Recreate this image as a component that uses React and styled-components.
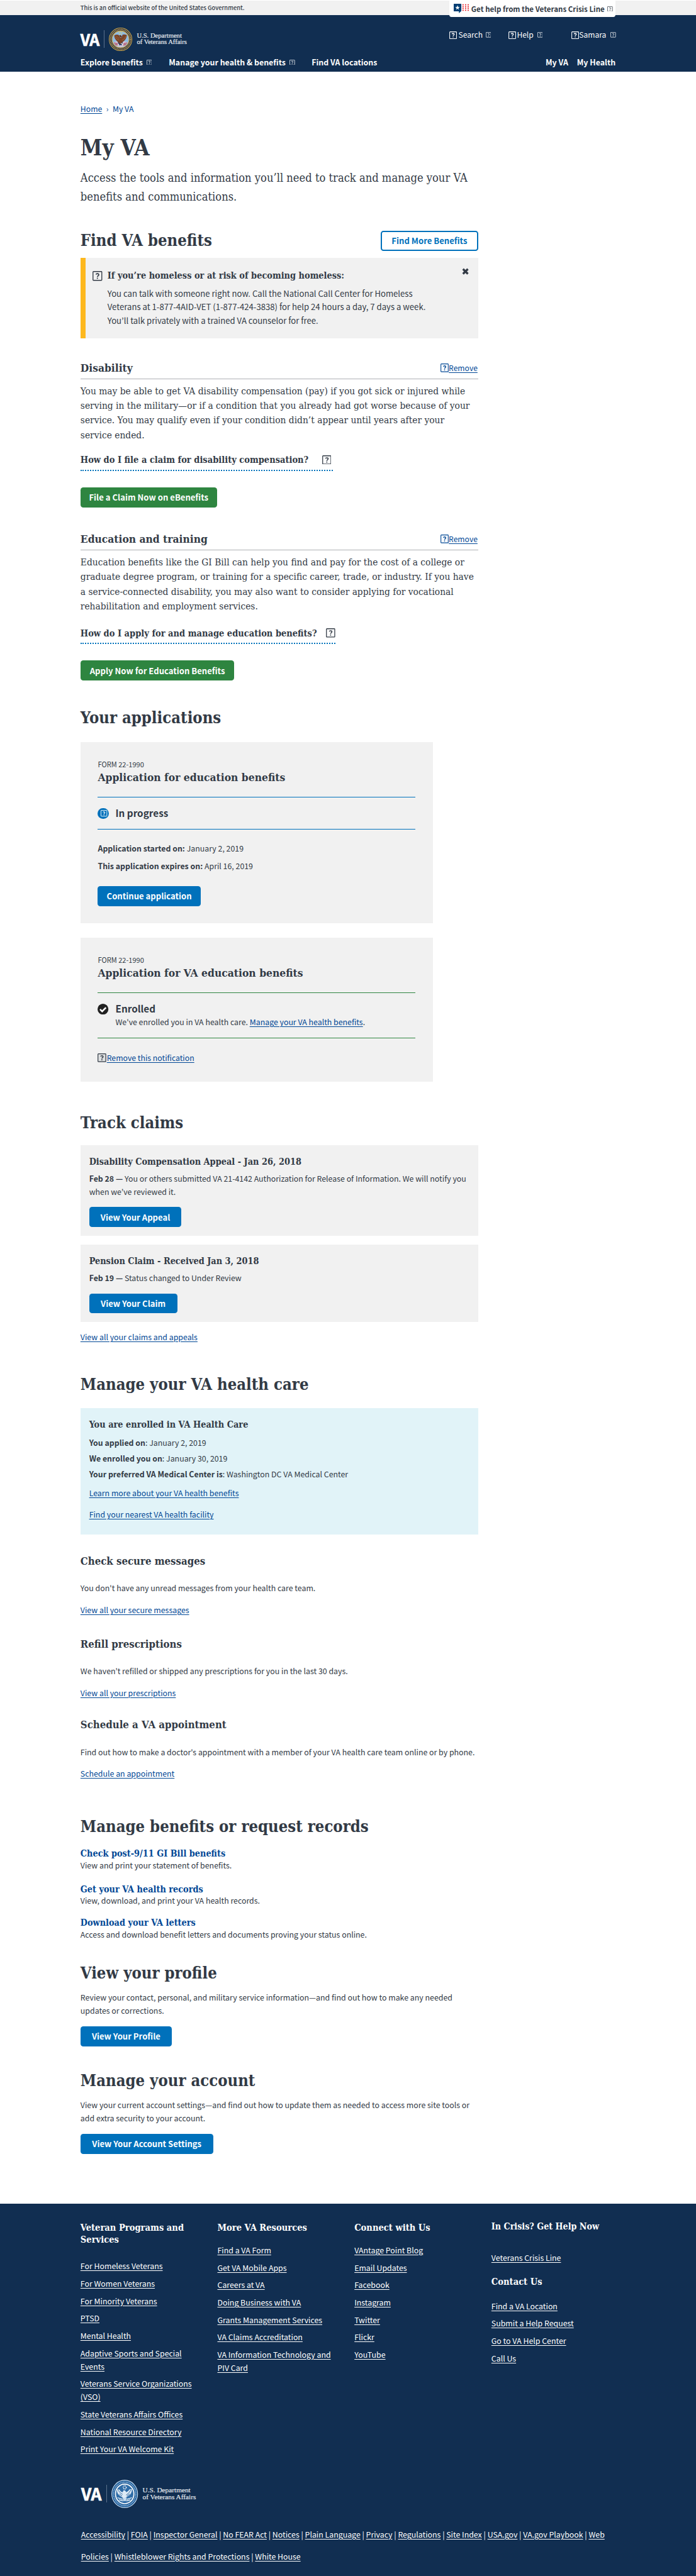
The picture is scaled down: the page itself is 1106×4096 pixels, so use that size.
import React from 'react';
import styled, { createGlobalStyle, css } from 'styled-components';

/* 1rem is ten layout pixels of the 1280px wide page */
const rem = (n) => `${n / 10}rem`;

const color = {
  ink: '#323a45',
  navy: '#112e51',
  link: '#004795',
  blue: '#0071bb',
  green: '#2e8540',
  gray: '#f1f1f1',
  sky: '#e1f3f8',
  gold: '#fdb81e',
};

const sans = css`font-family: "Noto Sans CJK KR", "Open Sans", sans-serif;`;
const slab = css`font-family: "DejaVu Serif Condensed", "DejaVu Serif", serif; font-stretch: condensed;`;

const GlobalStyle = createGlobalStyle`
  html { font-size: 8.638px; }
  body { margin: 0; background: #fff; color: ${color.ink}; ${sans} }
  * { box-sizing: border-box; }
  h1, h2, h3, h4, p, ul { margin: 0; padding: 0; }
  ul { list-style: none; }
`;

const space = css`margin-top: ${(p) => rem(p.$mt || 0)};`;

const Page = styled.div`
  width: 100%;
  white-space: nowrap;
  overflow: hidden;
`;

/* ---------- icons ---------- */
const IconBox = styled.svg`
  display: block;
  flex: none;
  width: ${(p) => rem(p.$w)};
  height: ${(p) => rem(p.$h || p.$w)};
  fill: none;
  stroke: currentColor;
`;

function Unknown({ w, h }) {
  return (
    <IconBox $w={w} $h={h} viewBox="0 0 16 16" preserveAspectRatio="none">
      <rect x="0.8" y="0.8" width="14.4" height="14.4" rx="0.8" strokeWidth="1.4" />
      <path d="M5.7 5.6C6.1 4 10.3 3.6 10.3 6.1C10.3 7.7 8 7.8 8 9.6" strokeWidth="1.7" />
      <path d="M8 10.8V12.6" strokeWidth="1.9" />
    </IconBox>
  );
}

function CloseIcon() {
  return (
    <IconBox $w={13} viewBox="0 0 13 13">
      <path d="M2 2L11 11M11 2L2 11" strokeWidth="3.8" />
    </IconBox>
  );
}

function CheckIcon() {
  return (
    <IconBox $w={20} viewBox="0 0 20 20">
      <circle cx="10" cy="10" r="10" fill="#212121" stroke="none" />
      <path d="M4.6 10.2L8.5 14L15.4 7.1" stroke="#fff" strokeWidth="3" />
    </IconBox>
  );
}

function CrisisIcon() {
  return (
    <IconBox $w={28} $h={17.5} viewBox="0 0 28 17.5">
      <path d="M0 0.6Q0 0 .6 0H13.4Q14 0 14 .6V13.2L9.6 17.5V14H.6Q0 14 0 13.4Z" fill="#003e73" stroke="none" />
      <path d="M7 2.7L8.1 5.8H11.3L8.7 7.8L9.6 11L7 9.1L4.4 11L5.3 7.8L2.7 5.8H5.9Z" fill="#fff" stroke="none" />
      <path d="M16 2H28M16 5.3H28M16 8.6H28M16 11.9H28" stroke="#e8343c" strokeWidth="2" strokeDasharray="2.4 2.3" />
    </IconBox>
  );
}

function ColorSeal() {
  return (
    <IconBox $w={43} viewBox="0 0 43 43">
      <circle cx="21.5" cy="21.5" r="20.9" fill="#1b2440" stroke="#c9a64c" strokeWidth="1.2" />
      <circle cx="21.5" cy="21.5" r="18.2" stroke="#c2a257" strokeWidth="2.6" strokeDasharray="1.5 1.1" />
      <circle cx="21.5" cy="21.5" r="15.6" fill="#8fbbe2" stroke="#d3ad4a" strokeWidth="1.3" />
      <path d="M8.5 27L15 25L28 25L34.5 27Q31 35.5 21.5 36Q12 35.5 8.5 27Z" fill="#cfc4d6" stroke="none" />
      <path d="M9.5 28L16 29.5M11 31L16.5 32M33.5 28L27 29.5M32 31L26.5 32" stroke="#a9304a" strokeWidth="1.3" />
      <path d="M16 25H26L24 32H18Z" fill="#27396c" stroke="none" />
      <path d="M9.8 14.5Q10.5 22 16.5 26L21 30L25.5 26Q32.5 22 33.2 13.5Q28 11.5 25 13L23.5 18L21 18.5L18.6 14Q15 11.5 9.8 14.5Z" fill="#7b4427" stroke="none" />
      <path d="M11.5 16.5Q15 22 19 23M31.5 15.5Q29 21.5 24 23.5M13.5 15Q17 19 19 20" stroke="#a96f45" strokeWidth="0.9" />
      <path d="M18.8 14.5L21.5 13.6L24 15.8L22.3 18.6Z" fill="#5d2c1a" stroke="none" />
      <circle cx="21.5" cy="9.8" r="2.4" stroke="#e0cc66" strokeWidth="1.5" strokeDasharray="1.4 0.9" />
      <path d="M18.5 30L16.5 33M22 28.5L26 31.5" stroke="#f0ead8" strokeWidth="1.4" />
    </IconBox>
  );
}

function BlueSeal() {
  return (
    <IconBox $w={49} $h={52} viewBox="0 0 52 52" preserveAspectRatio="none">
      <circle cx="26" cy="26" r="25.2" fill="#1c5a97" stroke="#c5dbef" strokeWidth="1.4" />
      <circle cx="26" cy="26" r="21.6" stroke="#a9c9e6" strokeWidth="2.4" strokeDasharray="1.4 1.4" />
      <circle cx="26" cy="26" r="18" fill="#2f6ca7" stroke="#fff" strokeWidth="2" />
      <path d="M11 18Q10 26 19 31L25 35L31 31Q41 26 40 17L35 18Q33 22 29 23L27 20L24 19L22 23Q17 22 16 18Z" fill="#dfebf6" stroke="none" />
      <path d="M13 19Q17 25 22 27M38 18.5Q35 25 29 28M15.5 26L21 30M36 26L30 30" stroke="#1c5a97" strokeWidth="1.1" />
      <path d="M12 33L22 36M15 37L23 39M40 33L30 36M37 37L29 39" stroke="#fff" strokeWidth="1.4" />
      <path d="M22 33H30L28.5 39H23.5Z" fill="#c5dbef" stroke="none" />
      <circle cx="26" cy="14" r="3" stroke="#fff" strokeWidth="1.8" strokeDasharray="1.7 1.2" />
    </IconBox>
  );
}

/* ---------- logo ---------- */
const LogoRow = styled.div`
  display: flex;
  align-items: center;
  height: ${(p) => rem(p.$large ? 52 : 43)};
  padding-left: ${(p) => rem(p.$large ? 1.5 : 0)};
  color: #fff;
  ${space}
`;
const LogoVA = styled.span`
  width: ${(p) => rem(p.$large ? 46 : 43)};
  font-size: ${(p) => rem(p.$large ? 30.5 : 28.8)};
  font-weight: 700;
  line-height: 1;
  letter-spacing: ${rem(-0.6)};
  -webkit-text-stroke: 0.7px #fff;
`;
const LogoRule = styled.span`
  width: 1px;
  height: ${rem(33)};
  margin-right: ${rem(8.6)};
  background: #5b718d;
`;
const LogoName = styled.span`
  margin-left: ${rem(8)};
  font-family: "Liberation Serif", serif;
  font-size: ${(p) => rem(p.$large ? 13.1 : 12.25)};
  line-height: ${(p) => rem(p.$large ? 13 : 12)};
  color: #e4e9ef;
  -webkit-text-stroke: 0.2px #e4e9ef;
`;

function Logo({ large, mt }) {
  return (
    <LogoRow $large={large} $mt={mt}>
      <LogoVA $large={large}>VA</LogoVA>
      <LogoRule />
      {large ? <BlueSeal /> : <ColorSeal />}
      <LogoName $large={large}>U.S. Department<br />of Veterans Affairs</LogoName>
    </LogoRow>
  );
}

/* ---------- header ---------- */
const OfficialBar = styled.div`
  display: flex;
  justify-content: space-between;
  height: ${rem(28)};
  padding: 0 ${rem(148)};
  border-top: ${rem(2)} solid #fff;
  background: ${color.gray};
`;
const OfficialText = styled.span`
  font-size: ${rem(10.82)};
  font-weight: 500;
  line-height: ${rem(26)};
`;
const CrisisTab = styled.a`
  display: flex;
  align-items: center;
  position: relative;
  z-index: 1;
  width: ${rem(306)};
  height: ${rem(30)};
  padding-left: ${rem(8)};
  border-radius: 0 0 ${rem(4)} ${rem(4)};
  background: #fff;
  font-size: ${rem(13.38)};
  font-weight: 700;
`;
const CrisisLabel = styled.span`
  margin: 0 ${rem(5)} 0 ${rem(4.5)};
`;
const Masthead = styled.header`
  height: ${rem(104)};
  padding: ${rem(22.5)} ${rem(148)} 0;
  background: ${color.navy};
  color: #fff;
`;
const MastTop = styled.div`
  display: flex;
  justify-content: space-between;
`;
const Tools = styled.div`
  display: flex;
  align-items: center;
  height: ${rem(28)};
`;
const Tool = styled.a`
  display: flex;
  align-items: center;
  gap: ${(p) => rem(p.$gap)};
  width: ${(p) => rem(p.$w)};
  font-size: ${rem(14)};
  line-height: ${rem(24)};
`;
const ToolLabel = styled.span`
  margin-right: ${(p) => rem(p.$mr)};
`;
const NavRow = styled.nav`
  display: flex;
  margin-top: ${rem(9.1)};
  font-size: ${rem(14.4)};
  font-weight: 700;
  line-height: ${rem(24)};
`;
const NavItem = styled.a`
  display: flex;
  align-items: center;
  gap: ${rem(7)};
  margin-right: ${(p) => rem(p.$mr)};
  margin-left: ${(p) => (p.$push ? 'auto' : 0)};
`;

/* ---------- main content ---------- */
const Main = styled.main`
  display: flex;
  flex-direction: column;
  align-items: flex-start;
  width: ${rem(880)};
  height: ${rem(3924)};
  padding-left: ${rem(148)};
`;
const Crumbs = styled.div`
  display: flex;
  gap: ${rem(7.5)};
  margin-top: ${rem(56.8)};
  font-size: ${rem(14.2)};
  line-height: ${rem(24)};
  color: ${color.link};
`;
const H1 = styled.h1`
  ${slab}
  margin-top: ${rem(33.3)};
  font-size: ${rem(40.3)};
  line-height: ${rem(50)};
`;
const Intro = styled.p`
  ${slab}
  margin-top: ${rem(14.6)};
  font-size: ${rem(21.06)};
  line-height: ${rem(34)};
`;
const H2 = styled.h2`
  ${slab}
  ${space}
  font-size: ${rem(29.5)};
  line-height: ${rem(38)};
`;
const H3 = styled.h3`
  ${slab}
  ${space}
  font-size: ${(p) => rem(p.$size || 19.32)};
  line-height: ${rem(28)};
`;
const TitleRow = styled.div`
  display: flex;
  justify-content: space-between;
  align-items: center;
  align-self: stretch;
  height: ${rem(38)};
  margin-top: ${rem(45.3)};
`;
const Button = styled.a`
  display: flex;
  align-items: center;
  justify-content: center;
  width: ${(p) => rem(p.$w)};
  height: ${rem(37)};
  ${space}
  border-radius: ${rem(5)};
  background: ${(p) => (p.$outline ? '#fff' : p.$green ? color.green : color.blue)};
  border: ${(p) => (p.$outline ? `${rem(2.4)} solid ${color.blue}` : '0')};
  color: ${(p) => (p.$outline ? color.blue : '#fff')};
  font-size: ${rem(15.17)};
  font-weight: 700;
`;
const Text = styled.p`
  ${space}
  font-size: ${(p) => rem(p.$size || 14.33)};
  line-height: ${(p) => rem(p.$lh || 24)};
`;
const Link = styled.a`
  color: ${color.link};
  text-decoration: underline;
  text-decoration-thickness: 1px;
  text-underline-offset: ${rem(2)};
`;

const Alert = styled.div`
  display: flex;
  align-items: flex-start;
  align-self: stretch;
  height: ${rem(148)};
  margin-top: ${rem(13)};
  padding: ${rem(20.2)} ${rem(17)} 0 ${rem(13.5)};
  border-left: ${rem(10)} solid ${color.gold};
  background: ${color.gray};
`;
const AlertIcon = styled.div`
  width: ${rem(27)};
  padding-top: ${rem(3.8)};
`;
const AlertTitle = styled.h4`
  ${slab}
  font-size: ${rem(16.69)};
  line-height: ${rem(24)};
`;
const AlertClose = styled.div`
  margin: ${rem(-1.6)} 0 0 auto;
`;

const BenefitHead = styled.div`
  display: flex;
  justify-content: space-between;
  align-self: stretch;
  height: ${rem(34.7)};
  padding-right: ${rem(1.5)};
  border-bottom: 1px solid #aeb0b5;
  ${space}
`;
const RemoveLink = styled.span`
  display: flex;
  align-items: center;
  gap: ${(p) => rem(p.$gap || 0)};
  height: ${rem(28)};
  ${space}
  color: ${color.link};
  font-size: ${(p) => rem(p.$size || 14.03)};
  line-height: ${rem(24)};
`;
const DarkIcon = styled.span`
  color: ${color.ink};
  background: #dfe1e2;
`;
const BenefitText = styled.p`
  ${slab}
  ${space}
  font-size: ${rem(17.8)};
  line-height: ${rem(27)};
`;
const Question = styled.h4`
  ${slab}
  ${space}
  display: flex;
  justify-content: space-between;
  width: ${(p) => rem(p.$w)};
  height: ${rem(32)};
  padding-right: ${(p) => rem(p.$pr)};
  border-bottom: ${rem(2.4)} dotted ${color.blue};
  font-size: ${rem(16.8)};
  line-height: ${rem(24)};
`;
const QuestionIcon = styled.span`
  padding-top: ${rem(2.8)};
`;

const AppCard = styled.section`
  width: ${rem(648)};
  height: ${(p) => rem(p.$h)};
  ${space}
  padding: ${rem(32.4)} ${rem(32)} 0;
  background: ${color.gray};
`;
const FormNo = styled.div`
  font-size: ${rem(12.82)};
  line-height: ${rem(18)};
`;
const AppTitle = styled.h3`
  ${slab}
  margin-top: ${rem(2.1)};
  font-size: ${rem(20.08)};
  line-height: ${rem(26)};
`;
const Status = styled.div`
  display: flex;
  align-items: flex-start;
  gap: ${rem(12.5)};
  height: ${(p) => rem(p.$h)};
  margin-top: ${rem(22)};
  padding-top: ${rem(16.8)};
  border: solid ${(p) => p.$color};
  border-width: 1px 0;
`;
const StatusMark = styled.span`
  margin-top: ${rem(3)};
`;
const ProgressDot = styled.span`
  display: flex;
  align-items: center;
  justify-content: center;
  width: ${rem(20)};
  height: ${rem(20)};
  margin-top: ${rem(3)};
  padding-left: ${rem(3)};
  border-radius: 50%;
  background: ${color.blue};
  color: #fff;
`;
const StatusName = styled.h4`
  font-size: ${rem(17.69)};
  line-height: ${rem(24)};
`;

const Panel = styled.section`
  align-self: stretch;
  height: ${(p) => rem(p.$h)};
  ${space}
  padding: ${rem(19.2)} ${rem(16)} 0;
  background: ${(p) => (p.$sky ? color.sky : color.gray)};
`;
const PanelTitle = styled.h3`
  ${slab}
  font-size: ${rem(16.67)};
  line-height: ${rem(24)};
`;
const RecordLink = styled.a`
  ${slab}
  ${space}
  font-size: ${rem(16.6)};
  font-weight: 700;
  line-height: ${rem(20)};
  color: ${color.link};
`;

/* ---------- footer ---------- */
const Footer = styled.footer`
  height: ${rem(687)};
  padding: ${rem(33)} ${rem(148)} 0;
  background: ${color.navy};
  color: #fff;
`;
const FooterCols = styled.div`
  display: grid;
  grid-template-columns: repeat(4, ${rem(252)});
  height: ${rem(432)};
`;
const FooterHead = styled.h2`
  ${slab}
  ${space}
  font-size: ${(p) => rem(p.$size || 16.9)};
  line-height: ${rem(22.5)};
`;
const FooterList = styled.ul`
  display: flex;
  flex-direction: column;
  gap: ${rem(7.75)};
  ${space}
  font-size: ${rem(14.3)};
  line-height: ${rem(24.3)};
`;
const FooterLink = styled.a`
  color: #fff;
  text-decoration: underline;
  text-decoration-thickness: 1px;
  text-underline-offset: ${rem(2)};
`;
const Legal = styled.div`
  margin: ${rem(29.4)} 0 0 ${rem(1)};
  font-size: ${rem(14.3)};
  line-height: ${rem(40)};
`;

const lines = (list) => list.map((t, i) => <React.Fragment key={t}>{i > 0 && <br />}{t}</React.Fragment>);

function Benefit({ mt, title, text, textMt, question, qMt, qWidth, qPad, action, width }) {
  return (
    <>
      <BenefitHead $mt={mt}>
        <H3 $size={20}>{title}</H3>
        <RemoveLink><Unknown w={15} h={16} /><Link>Remove</Link></RemoveLink>
      </BenefitHead>
      <BenefitText $mt={textMt}>{lines(text)}</BenefitText>
      <Question $mt={qMt} $w={qWidth} $pr={qPad}>
        {question}
        <QuestionIcon><Unknown w={17} /></QuestionIcon>
      </Question>
      <Button $green $w={width} $mt={29.9}>{action}</Button>
    </>
  );
}

function Column({ title, titleMt, titleSize, listMt, items }) {
  return (
    <>
      <FooterHead $mt={titleMt} $size={titleSize}>{lines(title)}</FooterHead>
      <FooterList $mt={listMt}>
        {items.map((t) => (
          <li key={t}><FooterLink>{lines(t.split('|'))}</FooterLink></li>
        ))}
      </FooterList>
    </>
  );
}

const legalRows = [
  ['Accessibility', 'FOIA', 'Inspector General', 'No FEAR Act', 'Notices', 'Plain Language', 'Privacy', 'Regulations', 'Site Index', 'USA.gov', 'VA.gov Playbook', 'Web'],
  ['Policies', 'Whistleblower Rights and Protections', 'White House'],
];

export default function App() {
  return (
    <Page>
      <GlobalStyle />
      <OfficialBar>
        <OfficialText>This is an official website of the United States Government.</OfficialText>
        <CrisisTab>
          <CrisisIcon />
          <CrisisLabel>Get help from the Veterans Crisis Line</CrisisLabel>
          <Unknown w={10} />
        </CrisisTab>
      </OfficialBar>
      <Masthead>
        <MastTop>
          <Logo />
          <Tools>
            <Tool $w={109} $gap={2.5}><Unknown w={14} /><ToolLabel $mr={3}>Search</ToolLabel><Unknown w={10} /></Tool>
            <Tool $w={115} $gap={1}><Unknown w={14} /><ToolLabel $mr={6}>Help</ToolLabel><Unknown w={10} /></Tool>
            <Tool $w={81.5} $gap={0.5}><Unknown w={14} /><ToolLabel $mr={7}>Samara</ToolLabel><Unknown w={10} /></Tool>
          </Tools>
        </MastTop>
        <NavRow>
          <NavItem $mr={31}>Explore benefits <Unknown w={10} /></NavItem>
          <NavItem $mr={31}>Manage your health &amp; benefits <Unknown w={10} /></NavItem>
          <NavItem $mr={0}>Find VA locations</NavItem>
          <NavItem $mr={16} $push>My VA</NavItem>
          <NavItem $mr={0}>My Health</NavItem>
        </NavRow>
      </Masthead>

      <Main>
        <Crumbs><Link>Home</Link><span>›</span><span>My VA</span></Crumbs>
        <H1>My VA</H1>
        <Intro>Access the tools and information you’ll need to track and manage your VA<br />benefits and communications.</Intro>

        <TitleRow>
          <H2>Find VA benefits</H2>
          <Button $outline $w={180}>Find More Benefits</Button>
        </TitleRow>
        <Alert>
          <AlertIcon><Unknown w={18} /></AlertIcon>
          <div>
            <AlertTitle>If you’re homeless or at risk of becoming homeless:</AlertTitle>
            <Text $mt={8.6} $size={15.21} $lh={25}>
              You can talk with someone right now. Call the National Call Center for Homeless<br />
              Veterans at 1-877-4AID-VET (1-877-424-3838) for help 24 hours a day, 7 days a week.<br />
              You’ll talk privately with a trained VA counselor for free.
            </Text>
          </div>
          <AlertClose><CloseIcon /></AlertClose>
        </Alert>

        <Benefit
          mt={40.3}
          title="Disability"
          textMt={9.1}
          text={[
            'You may be able to get VA disability compensation (pay) if you got sick or injured while',
            'serving in the military—or if a condition that you already had got worse because of your',
            'service. You may qualify even if your condition didn’t appear until years after your',
            'service ended.',
          ]}
          question="How do I file a claim for disability compensation?"
          qMt={20.1}
          qWidth={465}
          qPad={3.5}
          action="File a Claim Now on eBenefits"
          width={251}
        />
        <Benefit
          mt={44}
          title="Education and training"
          textMt={9.6}
          text={[
            'Education benefits like the GI Bill can help you find and pay for the cost of a college or',
            'graduate degree program, or training for a specific career, trade, or industry. If you have',
            'a service-connected disability, you may also want to consider applying for vocational',
            'rehabilitation and employment services.',
          ]}
          question="How do I apply for and manage education benefits?"
          qMt={23.7}
          qWidth={469}
          qPad={0}
          action="Apply Now for Education Benefits"
          width={283}
        />

        <H2 $mt={49.7}>Your applications</H2>
        <AppCard $h={334} $mt={25.3}>
          <FormNo>FORM 22-1990</FormNo>
          <AppTitle>Application for education benefits</AppTitle>
          <Status $h={60.4} $color={color.blue}>
            <ProgressDot><Unknown w={12} /></ProgressDot>
            <StatusName>In progress</StatusName>
          </Status>
          <Text $mt={20} $lh={32}>
            <b>Application started on:</b> January 2, 2019<br />
            <b>This application expires on:</b> April 16, 2019
          </Text>
          <Button $w={189} $mt={20.1}>Continue application</Button>
        </AppCard>
        <AppCard $h={265} $mt={26}>
          <FormNo>FORM 22-1990</FormNo>
          <AppTitle>Application for VA education benefits</AppTitle>
          <Status $h={85} $color={color.green}>
            <StatusMark><CheckIcon /></StatusMark>
            <div>
              <StatusName>Enrolled</StatusName>
              <Text $mt={1} $size={14.3}>We've enrolled you in VA health care. <Link>Manage your VA health benefits</Link>.</Text>
            </div>
          </Status>
          <RemoveLink $mt={21.8} $size={14.23} $gap={0.5}>
            <DarkIcon><Unknown w={16} /></DarkIcon><Link>Remove this notification</Link>
          </RemoveLink>
        </AppCard>

        <H2 $mt={56.7}>Track claims</H2>
        <Panel $h={167} $mt={22.3}>
          <PanelTitle>Disability Compensation Appeal - Jan 26, 2018</PanelTitle>
          <Text $mt={7}>
            <b>Feb 28 —</b> You or others submitted VA 21-4142 Authorization for Release of Information. We will notify you<br />
            when we’ve reviewed it.
          </Text>
          <Button $w={170} $mt={15.8}>View Your Appeal</Button>
        </Panel>
        <Panel $h={143} $mt={16}>
          <PanelTitle>Pension Claim - Received Jan 3, 2018</PanelTitle>
          <Text $mt={7}><b>Feb 19 —</b> Status changed to Under Review</Text>
          <Button $w={162} $mt={15.8}>View Your Claim</Button>
        </Panel>
        <Text $mt={15.7}><Link>View all your claims and appeals</Link></Text>

        <H2 $mt={56}>Manage your VA health care</H2>
        <Panel $sky $h={233} $mt={24.3}>
          <PanelTitle>You are enrolled in VA Health Care</PanelTitle>
          <Text $mt={7.3} $lh={28.5}>
            <b>You applied on</b>: January 2, 2019<br />
            <b>We enrolled you on</b>: January 30, 2019<br />
            <b>Your preferred VA Medical Center is</b>: Washington DC VA Medical Center
          </Text>
          <Text $mt={9.4}><Link>Learn more about your VA health benefits</Link></Text>
          <Text $mt={15.3}><Link>Find your nearest VA health facility</Link></Text>
        </Panel>

        <H3 $mt={35.3}>Check secure messages</H3>
        <Text $mt={23.7}>You don't have any unread messages from your health care team.</Text>
        <Text $mt={16.2}><Link>View all your secure messages</Link></Text>
        <H3 $mt={36.1}>Refill prescriptions</H3>
        <Text $mt={23.9}>We haven’t refilled or shipped any prescriptions for you in the last 30 days.</Text>
        <Text $mt={16.5}><Link>View all your prescriptions</Link></Text>
        <H3 $mt={32.6}>Schedule a VA appointment</H3>
        <Text $mt={24.4}>Find out how to make a doctor's appointment with a member of your VA health care team online or by phone.</Text>
        <Text $mt={15.5}><Link>Schedule an appointment</Link></Text>

        <H2 $mt={66.5}>Manage benefits or request records</H2>
        <RecordLink $mt={21.5}>Check post-9/11 GI Bill benefits</RecordLink>
        <Text $mt={0.5} $lh={22}>View and print your statement of benefits.</Text>
        <RecordLink $mt={22.5}>Get your VA health records</RecordLink>
        <Text $mt={0.5} $lh={22}>View, download, and print your VA health records.</Text>
        <RecordLink $mt={19.5}>Download your VA letters</RecordLink>
        <Text $mt={0.5} $lh={22}>Access and download benefit letters and documents proving your status online.</Text>

        <H2 $mt={40.6}>View your profile</H2>
        <Text $mt={14.4}>
          Review your contact, personal, and military service information—and find out how to make any needed<br />
          updates or corrections.
        </Text>
        <Button $w={168} $mt={16.3}>View Your Profile</Button>
        <H2 $mt={44.1}>Manage your account</H2>
        <Text $mt={14.6}>
          View your current account settings—and find out how to update them as needed to access more site tools or<br />
          add extra security to your account.
        </Text>
        <Button $w={244} $mt={16.3}>View Your Account Settings</Button>
      </Main>

      <Footer>
        <FooterCols>
          <div>
            <Column title={['Veteran Programs and', 'Services']} listMt={26.1} items={[
              'For Homeless Veterans', 'For Women Veterans', 'For Minority Veterans', 'PTSD', 'Mental Health',
              'Adaptive Sports and Special|Events', 'Veterans Service Organizations|(VSO)',
              'State Veterans Affairs Offices', 'National Resource Directory', 'Print Your VA Welcome Kit',
            ]} />
          </div>
          <div>
            <Column title={['More VA Resources']} listMt={19.1} items={[
              'Find a VA Form', 'Get VA Mobile Apps', 'Careers at VA', 'Doing Business with VA',
              'Grants Management Services', 'VA Claims Accreditation', 'VA Information Technology and|PIV Card',
            ]} />
          </div>
          <div>
            <Column title={['Connect with Us']} listMt={19.1} items={[
              'VAntage Point Blog', 'Email Updates', 'Facebook', 'Instagram', 'Twitter', 'Flickr', 'YouTube',
            ]} />
          </div>
          <div>
            <Column title={['In Crisis? Get Help Now']} titleMt={-1} titleSize={16.4} listMt={33.7} items={['Veterans Crisis Line']} />
            <Column title={['Contact Us']} titleMt={20.5} listMt={21.7} items={[
              'Find a VA Location', 'Submit a Help Request', 'Go to VA Help Center', 'Call Us',
            ]} />
          </div>
        </FooterCols>
        <Logo large mt={43.5} />
        <Legal>
          {legalRows.map((row) => (
            <div key={row[0]}>
              {row.map((t, i) => (
                <React.Fragment key={t}>{i > 0 && ' | '}<FooterLink>{t}</FooterLink></React.Fragment>
              ))}
            </div>
          ))}
        </Legal>
      </Footer>
    </Page>
  );
}
